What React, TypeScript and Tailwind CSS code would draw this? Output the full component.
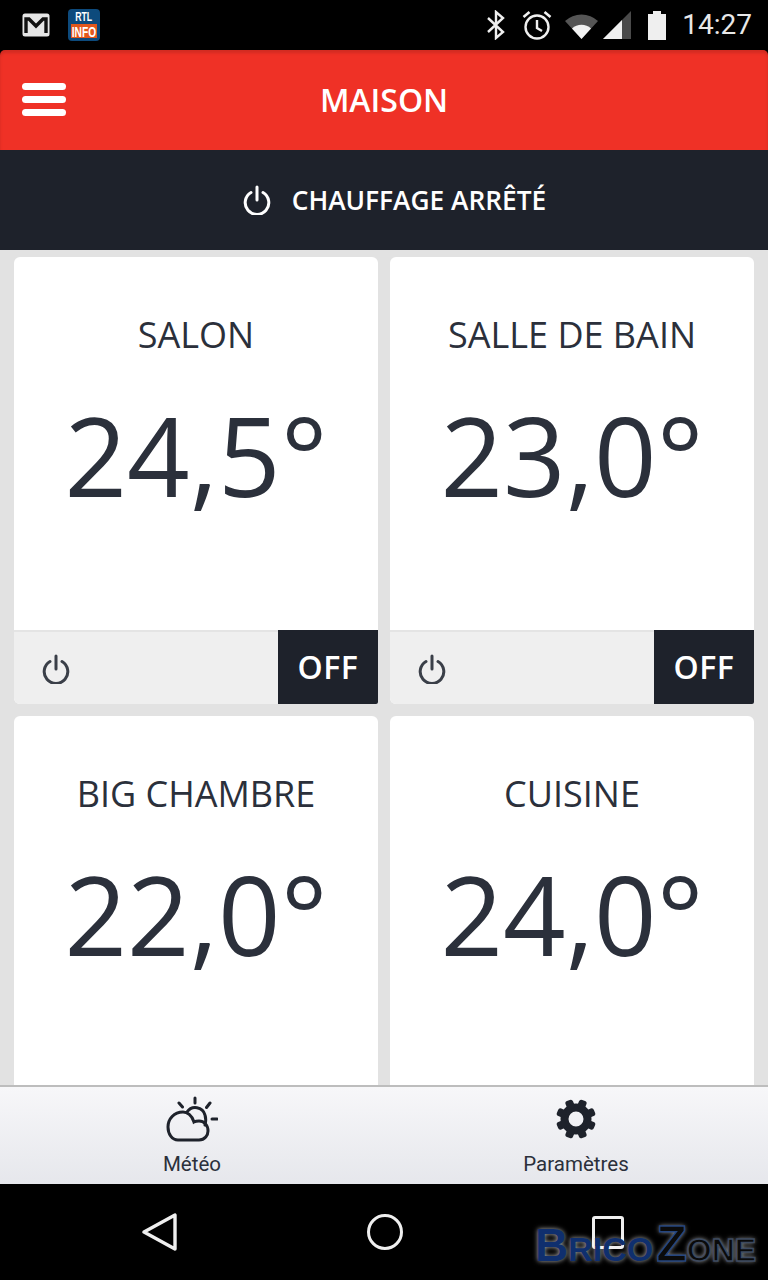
const gearTeeth = [22.5, 67.5, 112.5, 157.5, 202.5, 247.5, 292.5, 337.5];

function PowerIcon({ className }: { className: string }) {
  return (
    <svg viewBox="0 0 28 30" fill="none" stroke="currentColor" strokeWidth="3" strokeLinecap="round" className={className}>
      <path d="M14 2v13" />
      <path d="M8 7.5a11.8 11.8 0 1 0 12 0" />
    </svg>
  );
}

function StatusBar() {
  return (
    <div className="flex h-[50px] items-center bg-black pl-[22px] pr-[16px]">
      <svg viewBox="0 0 28 24" className="h-[24px] w-[28px]">
        <rect x="0.5" y="0.5" width="27" height="23" rx="2.5" fill="#e6e6e6" />
        <path d="M4 20V6h3l7 7 7-7h3v14" fill="none" stroke="#111" strokeWidth="3.4" strokeLinejoin="miter" />
      </svg>
      <div className="ml-[18px] flex h-[32px] w-[32px] flex-col items-center overflow-hidden rounded-[4px] bg-[#0d4a7c] pt-[3px] font-['Liberation_Sans',sans-serif] font-bold text-white">
        <span className="scale-x-[0.73] text-[12px] leading-[10px]">RTL</span>
        <span className="mt-[2px] flex h-[14px] w-[26px] items-center justify-center bg-[#e2571c]">
          <span className="scale-x-[0.68] text-[15px] leading-[13px]">INFO</span>
        </span>
      </div>
      <div className="ml-auto flex items-center">
        <svg viewBox="0 0 20 30" fill="none" stroke="#efefef" strokeWidth="2.4" className="h-[30px] w-[20px]">
          <path d="M2 8l15 14-7 6V2l7 6L2 22" />
        </svg>
        <svg viewBox="0 0 32 32" fill="none" stroke="#efefef" strokeWidth="2.4" className="ml-[15px] h-[32px] w-[32px]">
          <circle cx="16" cy="18" r="11.5" />
          <path d="M16 11v8l5 3" />
          <path d="M2.5 8l6-5M29.5 8l-6-5" strokeWidth="2.6" />
        </svg>
        <svg viewBox="0 0 36 30" className="ml-[11px] h-[30px] w-[36px]">
          <path d="M1 11a24 24 0 0 1 33 0L17.5 29z" fill="#555" />
          <path d="M8 18.5a14 14 0 0 1 19 0L17.500 29z" fill="#f2f2f2" />
        </svg>
        <svg viewBox="0 0 30 30" className="ml-[2px] h-[30px] w-[30px]">
          <path d="M1 29L29 1v28z" fill="#4a4a4a" />
          <path d="M1 29l19-19v19z" fill="#efefef" />
        </svg>
        <svg viewBox="0 0 20 30" className="ml-[15px] h-[30px] w-[20px]">
          <path d="M6 1h8v3h5v26H1V4h5z" fill="#efefef" />
        </svg>
        <span className="ml-[15px] font-['Roboto',sans-serif] text-[28px] leading-none text-[#e8e8e8]">14:27</span>
      </div>
    </div>
  );
}

function RoomCard({ name, temp, footer }: { name: string; temp: string; footer?: boolean }) {
  return (
    <div className="h-[447px] overflow-hidden rounded-[6px] rounded-br-[2px] bg-white">
      <div className="flex h-[373px] flex-col items-center pt-[54px]">
        <div className="text-[36px] leading-[48px] text-[#2b303b]">{name}</div>
        <div className="mt-[31px] text-[109.5px] leading-[130px] text-[#2b303b]">{temp}</div>
      </div>
      {footer && (
        <div className="flex h-[74px] items-stretch border-t-2 border-[#e4e4e4] bg-[#efefef]">
          <div className="flex flex-1 items-center pl-[28px] pt-[2px] text-[#3a3f48]">
            <PowerIcon className="h-[30px] w-[28px]" />
          </div>
          <div className="-mt-[2px] flex w-[100px] items-center justify-center bg-[#1e222b] text-[32px] font-semibold tracking-[0.5px] text-white">OFF</div>
        </div>
      )}
    </div>
  );
}

export default function App() {
  return (
    <div className="relative flex h-[1280px] w-[768px] flex-col overflow-hidden bg-black font-['Open_Sans',sans-serif]">
      <StatusBar />

      <div className="relative flex h-[100px] items-center justify-center rounded-t-[5px] bg-[#ef3126] shadow-[inset_0_3px_3px_rgba(0,0,0,0.12)]">
        <div className="absolute left-[22px] top-[33px] flex flex-col gap-[6px]">
          <span className="h-[7px] w-[44px] rounded-full bg-white" />
          <span className="h-[7px] w-[44px] rounded-full bg-white" />
          <span className="h-[7px] w-[44px] rounded-full bg-white" />
        </div>
        <span className="text-[32px] font-semibold leading-none text-white">MAISON</span>
      </div>

      <div className="flex h-[100px] items-center justify-center bg-[#1e222b] pl-[21px] text-white">
        <PowerIcon className="h-[30px] w-[28px]" />
        <span className="ml-[21px] text-[26.3px] font-semibold leading-none">CHAUFFAGE ARRÊTÉ</span>
      </div>

      <div className="flex-1 overflow-hidden bg-[#e2e2e2] px-[14px] pt-[7px]">
        <div className="grid grid-cols-2 gap-[12px]">
          <RoomCard name="SALON" temp="24,5°" footer />
          <RoomCard name="SALLE DE BAIN" temp="23,0°" footer />
          <RoomCard name="BIG CHAMBRE" temp="22,0°" />
          <RoomCard name="CUISINE" temp="24,0°" />
        </div>
      </div>

      <div className="flex h-[99px] border-t-2 border-[#bdbdbd] bg-gradient-to-b from-[#f7f7f9] to-[#e6e7ec] font-['Roboto',sans-serif]">
        <div className="flex w-[384px] flex-col items-center pt-[9px]">
          <svg viewBox="0 0 52 46" fill="none" stroke="#1e222b" strokeWidth="3" strokeLinecap="round" className="h-[46px] w-[52px]">
            <path d="M12 44H33C39 44 42 39 42 35C42 29 38 25 33 25C31 25 29 25.500 28 26C26 19 21 16 17 16C8 16 2 23 2 31C2 38 6 44 12 44Z" />
            <path d="M21 16A10 10 0 0 1 39 19C40 22 40 25 39 29" />
            <path d="M29 2v5M13 7l3.500 4M44 7l-3.500 4.500M46 23h5" />
          </svg>
          <span className="mt-[10px] text-[20.5px] leading-[24px] text-[#2b303b]">Météo</span>
        </div>
        <div className="flex w-[384px] flex-col items-center pt-[9px]">
          <svg viewBox="0 0 46 46" className="h-[46px] w-[46px]">
            <circle cx="23" cy="23" r="11.5" fill="none" stroke="#1e222b" strokeWidth="8" />
            {gearTeeth.map((angle) => (
              <rect key={angle} x="19" y="3" width="8" height="9" rx="2.500" fill="#1e222b" transform={`rotate(${angle} 23 23)`} />
            ))}
          </svg>
          <span className="mt-[10px] text-[20.5px] leading-[24px] text-[#2b303b]">Paramètres</span>
        </div>
      </div>

      <div className="relative flex h-[96px] items-center bg-black">
        <svg viewBox="0 0 36 38" fill="none" stroke="#efefef" strokeWidth="3.4" strokeLinejoin="round" className="absolute left-[142px] top-[29px] h-[38px] w-[36px]">
          <path d="M2 19L33 2v34z" />
        </svg>
        <div className="absolute left-[367px] top-[30px] h-[36px] w-[36px] rounded-full border-[3.5px] border-[#efefef]" />
        <div className="absolute left-[592px] top-[32px] h-[33px] w-[32px] rounded-[3px] border-[3.5px] border-[#efefef]" />
        <div className="absolute left-[535px] top-[35px] flex items-baseline font-['Liberation_Sans',sans-serif] font-bold leading-none [text-shadow:0_0_5px_rgba(255,255,255,0.7)]">
          <span className="text-[46px] text-[#0f2f6e]">B</span>
          <span className="text-[34px] text-[#0f2f6e]">RICO</span>
          <span className="ml-[3px] text-[50px] text-[#0a0a0a] [-webkit-text-stroke:1.5px_#24457f]">Z</span>
          <span className="text-[32px] text-[#0a0a0a] [-webkit-text-stroke:1.5px_#3d4a60]">ONE</span>
        </div>
      </div>
    </div>
  );
}
